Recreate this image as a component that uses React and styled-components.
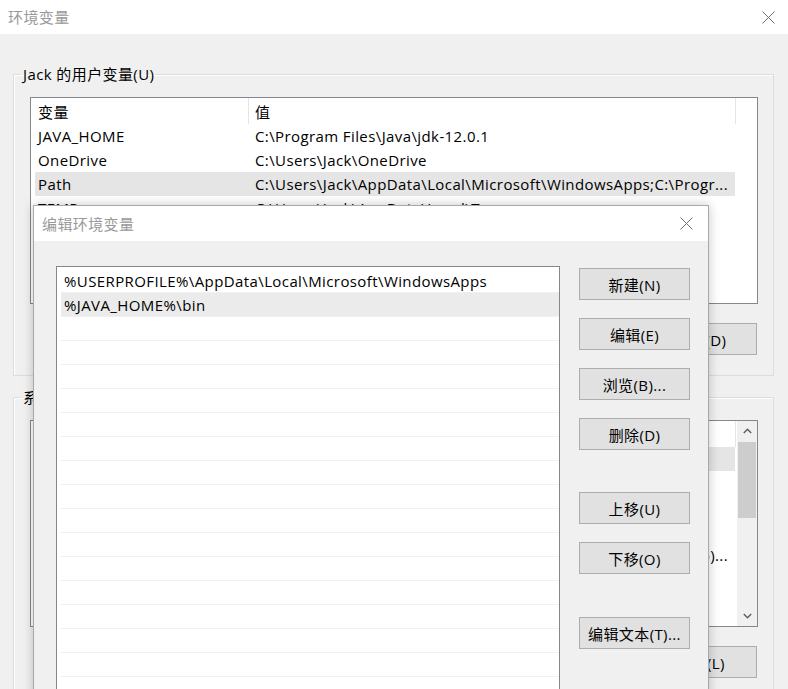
import React from 'react';
import styled, { createGlobalStyle } from 'styled-components';

const FONT = '"Open Sans", "Noto Sans CJK SC", sans-serif';

const GlobalStyle = createGlobalStyle`
  html, body {
    margin: 0;
    padding: 0;
  }
  body {
    font-family: ${FONT};
    font-size: 15px;
    letter-spacing: 0.4px;
    color: #000;
    overflow: hidden;
  }
  * {
    box-sizing: border-box;
  }
`;

const Desktop = styled.div`
  position: relative;
  width: 788px;
  height: 689px;
  overflow: hidden;
  background: #f0f0f0;
`;

const Window = styled.div`
  display: flex;
  flex-direction: column;
  width: 100%;
  height: 100%;
`;

const TitleBar = styled.div`
  display: flex;
  align-items: center;
  justify-content: space-between;
  flex-shrink: 0;
  height: ${(p) => p.$height}px;
  padding: 0 ${(p) => p.$right}px 0 ${(p) => p.$left}px;
  background: #fff;
  color: #999;
  line-height: 20px;
`;

const CloseGlyph = styled.svg`
  width: 13px;
  height: 13px;
  display: block;
`;

const WindowBody = styled.div`
  flex: 1;
  padding: 30px 14px 0 13px;
  background: #f0f0f0;
`;

const GroupBox = styled.fieldset`
  margin: 0 0 ${(p) => p.$after || 0}px;
  padding: 13px 15px 20px 16px;
  border: 1px solid #dcdcdc;
  box-shadow: inset 1px 1px 0 #fff;
  min-width: 0;
`;

const GroupLabel = styled.legend`
  margin-left: -9px;
  padding: 0 2px;
  line-height: 20px;
`;

const ListView = styled.div`
  display: flex;
  height: ${(p) => p.$height}px;
  background: #fff;
  border: 1px solid #828790;
  overflow: hidden;
`;

const ListColumns = styled.div`
  flex: 1;
  min-width: 0;
  display: flex;
  flex-direction: column;
`;

const HeaderRow = styled.div`
  display: flex;
  height: 26px;
  flex-shrink: 0;
`;

const HeaderCell = styled.div`
  display: flex;
  align-items: center;
  width: ${(p) => p.$width}px;
  flex: ${(p) => (p.$width ? 'none' : 1)};
  padding-left: ${(p) => p.$pad}px;
  border-right: ${(p) => (p.$width ? '1px solid #e5e5e5' : 'none')};
`;

const VarRow = styled.div`
  display: flex;
  align-items: center;
  flex-shrink: 0;
  width: 700px;
  height: 24px;
  margin-left: 4px;
  background: ${(p) => (p.$selected ? '#e5e5e5' : 'transparent')};
  white-space: nowrap;
`;

const NameCell = styled.div`
  width: 213px;
  padding-left: 3px;
  overflow: hidden;
`;

const ValueCell = styled.div`
  display: flex;
  justify-content: ${(p) => (p.$clipStart ? 'flex-end' : 'flex-start')};
  flex: 1;
  min-width: 0;
  padding: 0 7px 0 7px;
  overflow: hidden;
`;

const ScrollBar = styled.div`
  display: flex;
  flex-direction: column;
  width: 20px;
  flex-shrink: 0;
  background: #f0f0f0;
  padding: 0 1px 0 1px;
`;

const ScrollArrow = styled.div`
  display: flex;
  align-items: center;
  justify-content: center;
  height: 20px;
`;

const ScrollTrack = styled.div`
  flex: 1;
  padding-top: 1px;
`;

const ScrollThumb = styled.div`
  height: 76px;
  background: #cdcdcd;
`;

const ButtonRow = styled.div`
  display: flex;
  justify-content: flex-end;
  gap: 12px;
  margin-top: 19px;
  padding-right: 1px;
`;

const PushButton = styled.button`
  display: flex;
  align-items: center;
  justify-content: center;
  width: ${(p) => p.$width || 111}px;
  height: 32px;
  margin: ${(p) => p.$before || 0}px 0 0;
  padding: 0;
  border: 1px solid #adadad;
  background: #e1e1e1;
  font-family: ${FONT};
  font-size: 15px;
  letter-spacing: 0.4px;
  color: #000;
  white-space: nowrap;
`;

const Dialog = styled.div`
  position: absolute;
  left: 33px;
  top: 205px;
  width: 676px;
  height: 520px;
  display: flex;
  flex-direction: column;
  border: 1px solid #a9a9a9;
  background: #f0f0f0;
  box-shadow: 0 0 10px rgba(0, 0, 0, 0.22);
`;

const DialogBody = styled.div`
  flex: 1;
  display: flex;
  gap: 19px;
  padding: 25px 18px 0 22px;
`;

const EntryList = styled.div`
  width: 504px;
  height: 440px;
  display: flex;
  flex-direction: column;
  padding-top: 1px;
  background: #fff;
  border: 1px solid #828790;
  overflow: hidden;
`;

const EntryRow = styled.div`
  display: flex;
  align-items: center;
  flex-shrink: 0;
  height: 24px;
  margin-left: 4px;
  padding-left: 3px;
  border-top: 1px solid ${(p) => (p.$first ? 'transparent' : '#f0f0f0')};
  background: ${(p) => (p.$selected ? '#ebebeb' : 'transparent')};
  white-space: nowrap;
`;

const ButtonStack = styled.div`
  display: flex;
  flex-direction: column;
  gap: 18px;
  padding-top: 2px;
`;

const CloseIcon = () => (
  <CloseGlyph viewBox="0 0 13 13">
    <path d="M0.5 0.5 L12.5 12.5 M12.5 0.5 L0.5 12.5" stroke="#6f6f6f" strokeWidth="1" fill="none" />
  </CloseGlyph>
);

const Chevron = ({ up }) => (
  <svg width="9" height="6" viewBox="0 0 9 6">
    <polyline
      points={up ? '0.8,5 4.5,1.3 8.2,5' : '0.8,1 4.5,4.7 8.2,1'}
      stroke="#606060"
      strokeWidth="1.5"
      fill="none"
    />
  </svg>
);

const userVars = [
  { name: 'JAVA_HOME', value: 'C:\\Program Files\\Java\\jdk-12.0.1' },
  { name: 'OneDrive', value: 'C:\\Users\\Jack\\OneDrive' },
  { name: 'Path', value: 'C:\\Users\\Jack\\AppData\\Local\\Microsoft\\WindowsApps;C:\\Progr...', selected: true },
  { name: 'TEMP', value: 'C:\\Users\\Jack\\AppData\\Local\\Temp' },
  { name: 'TMP', value: 'C:\\Users\\Jack\\AppData\\Local\\Temp' },
];

const systemVars = [
  { name: 'ComSpec', value: 'C:\\WINDOWS\\system32\\cmd.exe', selected: true },
  { name: 'DriverData', value: 'C:\\Windows\\System32\\Drivers\\DriverData' },
  { name: 'NUMBER_OF_PROCESSORS', value: '4' },
  { name: 'OS', value: 'Windows_NT' },
  { name: 'Path', value: 'C:\\Program Files (x86)\\Common Files\\Oracle\\Java\\javapath;C:\\Program Files (x86)...', clip: true },
  { name: 'PATHEXT', value: '.COM;.EXE;.BAT;.CMD;.VBS;.VBE;.JS;.JSE;.WSF;.WSH;.MSC' },
  { name: 'PROCESSOR_ARCHITECTURE', value: 'AMD64' },
  { name: 'PROCESSOR_IDENTIFIER', value: 'Intel64 Family 6 Model 142 Stepping 10' },
];

const pathEntries = [
  '%USERPROFILE%\\AppData\\Local\\Microsoft\\WindowsApps',
  '%JAVA_HOME%\\bin',
  ...Array(16).fill(''),
];

const VariableList = ({ vars, height, scroll }) => (
  <ListView $height={height}>
    <ListColumns>
      <HeaderRow>
        <HeaderCell $width={218} $pad={7}>变量</HeaderCell>
        <HeaderCell $width={487} $pad={6}>值</HeaderCell>
        <HeaderCell />
      </HeaderRow>
      {vars.map((v) => (
        <VarRow key={v.name} $selected={v.selected}>
          <NameCell>{v.name}</NameCell>
          <ValueCell $clipStart={v.clip}>
            <span>{v.value}</span>
          </ValueCell>
        </VarRow>
      ))}
    </ListColumns>
    {scroll && (
      <ScrollBar>
        <ScrollArrow>
          <Chevron up />
        </ScrollArrow>
        <ScrollTrack>
          <ScrollThumb />
        </ScrollTrack>
        <ScrollArrow>
          <Chevron />
        </ScrollArrow>
      </ScrollBar>
    )}
  </ListView>
);

export default function App() {
  return (
    <>
      <GlobalStyle />
      <Desktop>
        <Window>
          <TitleBar $height={34} $left={8} $right={13}>
            <span>环境变量</span>
            <CloseIcon />
          </TitleBar>
          <WindowBody>
            <GroupBox $after={11}>
              <GroupLabel>Jack 的用户变量(U)</GroupLabel>
              <VariableList vars={userVars} height={207} />
              <ButtonRow>
                <PushButton $width={113}>新建(N)...</PushButton>
                <PushButton $width={113}>编辑(E)...</PushButton>
                <PushButton $width={113}>删除(D)</PushButton>
              </ButtonRow>
            </GroupBox>
            <GroupBox>
              <GroupLabel>系统变量(S)</GroupLabel>
              <VariableList vars={systemVars} height={207} scroll />
              <ButtonRow>
                <PushButton $width={113}>新建(W)...</PushButton>
                <PushButton $width={113}>编辑(I)...</PushButton>
                <PushButton $width={113}>删除(L)</PushButton>
              </ButtonRow>
            </GroupBox>
          </WindowBody>
        </Window>

        <Dialog>
          <TitleBar $height={35} $left={8} $right={15}>
            <span>编辑环境变量</span>
            <CloseIcon />
          </TitleBar>
          <DialogBody>
            <EntryList>
              {pathEntries.map((entry, i) => (
                <EntryRow key={i} $first={i === 0} $selected={i === 1}>
                  {entry}
                </EntryRow>
              ))}
            </EntryList>
            <ButtonStack>
              <PushButton>新建(N)</PushButton>
              <PushButton>编辑(E)</PushButton>
              <PushButton>浏览(B)...</PushButton>
              <PushButton>删除(D)</PushButton>
              <PushButton $before={24}>上移(U)</PushButton>
              <PushButton>下移(O)</PushButton>
              <PushButton $before={25}>编辑文本(T)...</PushButton>
            </ButtonStack>
          </DialogBody>
        </Dialog>
      </Desktop>
    </>
  );
}
